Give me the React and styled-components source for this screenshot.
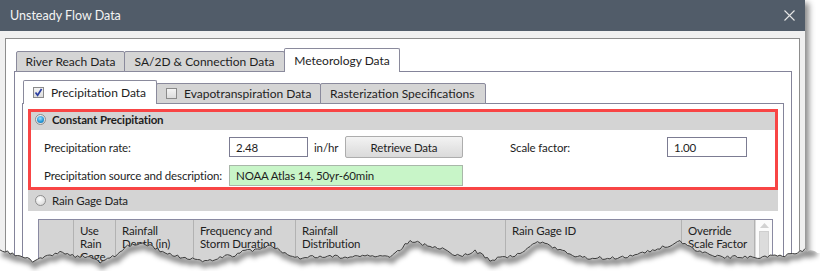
import React from 'react';
import styled, { createGlobalStyle, css } from 'styled-components';

const GlobalStyle = createGlobalStyle`
  html, body {
    margin: 0;
    padding: 0;
    background: #fff;
  }
  body {
    font-family: Lato, "Noto Sans", sans-serif;
    font-size: 11.5px;
    letter-spacing: -0.15px;
    color: #1e1e1e;
  }
`;

const Stage = styled.div`
  position: relative;
  width: 820px;
  height: 271px;
  overflow: hidden;
  background: #fff;
`;

const Window = styled.div`
  width: 805px;
  height: 340px;
  display: flex;
  flex-direction: column;
  background: #f0f0f0;
  box-shadow: 4px 3px 6px rgba(0, 0, 0, 0.45);
`;

const TitleBar = styled.div`
  height: 31px;
  flex: none;
  display: flex;
  align-items: center;
  justify-content: space-between;
  padding: 0 10px 0 10px;
  background: #515c69;
  color: #f4f4f4;
  font-size: 12.5px;
  letter-spacing: 0;
`;

const Client = styled.div`
  flex: 1;
  display: flex;
  padding: 7px 5px 0 5px;
`;

const OuterPanel = styled.div`
  flex: 1;
  display: flex;
  flex-direction: column;
  background: #fff;
  border: 1px solid #8d8d8d;
  border-bottom: none;
  padding: 9px 7px 0 8px;
`;

const TabStrip = styled.div`
  display: flex;
  align-items: flex-end;
  padding-left: ${(p) => p.$indent}px;
  height: ${(p) => p.$height}px;
  margin-bottom: -1px;
  position: relative;
  z-index: 1;
`;

const Tab = styled.div`
  width: ${(p) => p.$width}px;
  box-sizing: border-box;
  display: flex;
  align-items: center;
  justify-content: ${(p) => (p.$start ? 'flex-start' : 'center')};
  gap: 7px;
  padding-left: ${(p) => (p.$start ? 9 : 0)}px;
  border: 1px solid #8a8a9c;
  border-bottom: none;
  border-radius: 2px 2px 0 0;
  font-size: 12px;
  letter-spacing: 0;
  & + & {
    margin-left: -1px;
  }
  ${(p) =>
    p.$active
      ? css`
          height: ${p.$height}px;
          background: #fff;
          position: relative;
          z-index: 2;
        `
      : css`
          height: ${p.$height - 3}px;
          background: #d5d5d5;
          border-bottom: 1px solid #8a8a9c;
        `}
`;

const TabPanel = styled.div`
  flex: 1;
  display: flex;
  flex-direction: column;
  border: 1px solid #84849a;
  border-bottom: none;
  background: #fff;
  padding: ${(p) => p.$pad};
`;

const Section = styled.div`
  position: relative;
  display: flex;
  flex-direction: column;
`;

const SectionHeader = styled.div`
  height: 21px;
  display: flex;
  align-items: center;
  gap: 6px;
  padding-left: 7px;
  background: #d4d4d4;
  font-weight: ${(p) => (p.$bold ? 700 : 400)};
`;

const Radio = styled.span`
  width: 11px;
  height: 11px;
  box-sizing: border-box;
  border-radius: 50%;
  border: 1px solid #8e8e8e;
  background: radial-gradient(circle at 40% 35%, #ffffff 0%, #e6e6e6 55%, #cfcfcf 100%);
  display: inline-flex;
  align-items: center;
  justify-content: center;
  &::after {
    content: '';
    display: ${(p) => (p.$checked ? 'block' : 'none')};
    width: 7px;
    height: 7px;
    border-radius: 50%;
    background: radial-gradient(circle at 45% 35%, #9fe0ff 0%, #2a9ad8 55%, #0e5f9a 100%);
  }
`;

const Check = styled.span`
  width: 11px;
  height: 11px;
  box-sizing: border-box;
  border: 1px solid #8a8a8a;
  background: linear-gradient(#f4f4f4, #dcdcdc);
  display: inline-flex;
  align-items: center;
  justify-content: center;
`;

const Fields = styled.div`
  display: grid;
  grid-template-columns: 185px 79px 37px 118px 47px 157px 80px;
  grid-auto-rows: 22px;
  row-gap: 6px;
  align-items: center;
  padding: 6px 0 4px 16px;
  background: #fff;
`;

const Label = styled.span`
  padding-left: ${(p) => p.$pad || 0}px;
  white-space: nowrap;
`;

const TextBox = styled.div`
  height: ${(p) => (p.$green ? 21 : 20)}px;
  box-sizing: border-box;
  display: flex;
  align-items: center;
  padding-left: 6px;
  border: 1px solid ${(p) => (p.$green ? '#a9b7a9' : '#7c7c92')};
  background: ${(p) => (p.$green ? '#c8f5c8' : '#fff')};
  grid-column: ${(p) => p.$span || 'auto'};
`;

const Button = styled.div`
  height: 22px;
  box-sizing: border-box;
  display: flex;
  align-items: center;
  justify-content: center;
  border: 1px solid #adadad;
  border-radius: 2px;
  background: linear-gradient(#f3f3f3, #e6e6e6 50%, #dadada);
`;

const Annotation = styled.div`
  position: absolute;
  inset: 0;
  border: 3px solid #f84545;
  pointer-events: none;
`;

const TableWrap = styled.div`
  padding: 8px 5px 0 10px;
  background: #fff;
`;

const Table = styled.div`
  display: grid;
  grid-template-columns: 35px 42px 78px 102px 210px 176px 73px 17px;
  border: 1px solid #8a8aa2;
`;

const HeadCell = styled.div`
  height: 60px;
  box-sizing: border-box;
  padding: 4px 6px 0 6px;
  line-height: 13px;
  background: #d4d4d4;
  border-right: 1px solid #b2b2b2;
  white-space: nowrap;
`;

const ScrollBar = styled.div`
  height: 60px;
  background: #fbfbfb;
  border-left: 1px solid #d8d8d8;
  display: flex;
  flex-direction: column;
  align-items: center;
  padding-top: 3px;
  gap: 3px;
`;

const Thumb = styled.div`
  width: 8px;
  flex: 1;
  background: #dcdcdc;
  border: 1px solid #cfcfcf;
`;

const TearLayer = styled.svg`
  position: absolute;
  left: 0;
  top: 0;
  pointer-events: none;
`;

const tearBase = [
  [0, 249], [10, 253], [25, 258], [33, 261], [45, 257], [60, 252], [75, 256], [90, 258],
  [100, 262], [115, 256], [125, 247], [140, 243], [150, 245], [160, 251], [175, 256],
  [195, 259], [205, 262], [220, 257], [235, 255], [245, 251], [260, 250], [270, 245],
  [280, 251], [300, 258], [320, 256], [345, 257], [370, 255], [390, 258], [400, 250],
  [410, 240], [425, 245], [440, 248], [460, 257], [475, 251], [490, 260], [505, 257],
  [520, 254], [530, 246], [540, 242], [555, 248], [575, 256], [590, 258], [620, 258],
  [640, 253], [660, 248], [680, 242], [695, 250], [720, 257], [760, 257], [790, 255],
  [805, 250], [820, 252],
];

const tearY = (x) => {
  for (let i = 1; i < tearBase.length; i++) {
    const [x1, y1] = tearBase[i];
    const [x0, y0] = tearBase[i - 1];
    if (x <= x1) return y0 + ((y1 - y0) * (x - x0)) / (x1 - x0);
  }
  return 252;
};

const noise = (x) => {
  const h = Math.sin(x * 91.7 + 3.1) * 10000;
  return h - Math.floor(h) - 0.5;
};

const tearPts = [];
for (let x = 0; x <= 820; x += 2.5) {
  tearPts.push([x, +(tearY(x) + noise(x) * 3).toFixed(1)]);
}
const tearLine = (limit) =>
  tearPts
    .filter(([x]) => x <= limit)
    .map(([x, y], i) => `${i ? 'L' : 'M'}${x},${y}`)
    .join(' ');
const tearArea = `${tearLine(820)} L820,271 L0,271 Z`;

const TornEdge = () => (
  <TearLayer width="820" height="271" viewBox="0 0 820 271">
    <defs>
      <clipPath id="below">
        <path d={tearArea} />
      </clipPath>
      <filter id="soft" x="-5%" y="-50%" width="110%" height="200%">
        <feGaussianBlur stdDeviation="2.5" />
      </filter>
    </defs>
    <path d={tearArea} fill="#fff" />
    <g clipPath="url(#below)">
      <path
        d={tearLine(815)}
        transform="translate(2,3)"
        fill="none"
        stroke="rgba(0,0,0,0.45)"
        strokeWidth="6"
        filter="url(#soft)"
      />
    </g>
    <path d={tearLine(806)} fill="none" stroke="#3c3c3c" strokeWidth="1" />
  </TearLayer>
);

const CloseIcon = () => (
  <svg width="11" height="11" viewBox="0 0 11 11">
    <path d="M0.5 0.5 L10.5 10.5 M10.5 0.5 L0.5 10.5" stroke="#e6e6e6" strokeWidth="1.1" />
  </svg>
);

const CheckMark = () => (
  <svg width="9" height="9" viewBox="0 0 9 9">
    <path d="M1.5 4.5 L3.6 7.2 L7.6 1" fill="none" stroke="#2b3ea0" strokeWidth="1.7" />
  </svg>
);

const headers = [
  [],
  ['Use', 'Rain', 'Gage'],
  ['Rainfall', 'Depth (in)'],
  ['Frequency and', 'Storm Duration'],
  ['Rainfall', 'Distribution'],
  ['Rain Gage ID'],
  ['Override', 'Scale Factor'],
];

const App = () => (
  <Stage>
    <GlobalStyle />
    <Window>
      <TitleBar>
        <span>Unsteady Flow Data</span>
        <CloseIcon />
      </TitleBar>
      <Client>
        <OuterPanel>
          <TabStrip $indent={2} $height={24}>
            <Tab $width={109} $height={24}>River Reach Data</Tab>
            <Tab $width={161} $height={24}>SA/2D &amp; Connection Data</Tab>
            <Tab $width={116} $height={24} $active>Meteorology Data</Tab>
          </TabStrip>
          <TabPanel $pad="8px 7px 0 7px">
            <TabStrip $indent={1} $height={24}>
              <Tab $width={134} $height={24} $active $start>
                <Check><CheckMark /></Check>
                Precipitation Data
              </Tab>
              <Tab $width={165} $height={24} $start>
                <Check />
                Evapotranspiration Data
              </Tab>
              <Tab $width={166} $height={24} $start>
                Rasterization Specifications
              </Tab>
            </TabStrip>
            <TabPanel $pad="5px 5px 0 5px">
              <Section>
                <SectionHeader $bold>
                  <Radio $checked />
                  Constant Precipitation
                </SectionHeader>
                <Fields>
                  <Label>Precipitation rate:</Label>
                  <TextBox>2.48</TextBox>
                  <Label $pad={6}>in/hr</Label>
                  <Button>Retrieve Data</Button>
                  <span />
                  <Label>Scale factor:</Label>
                  <TextBox>1.00</TextBox>
                  <Label>Precipitation source and description:</Label>
                  <TextBox $green $span="2 / span 3">NOAA Atlas 14, 50yr-60min</TextBox>
                </Fields>
                <Annotation />
              </Section>
              <Section>
                <SectionHeader>
                  <Radio />
                  Rain Gage Data
                </SectionHeader>
                <TableWrap>
                  <Table>
                    {headers.map((lines, i) => (
                      <HeadCell key={i}>
                        {lines.map((l) => (
                          <div key={l}>{l}</div>
                        ))}
                      </HeadCell>
                    ))}
                    <ScrollBar>
                      <svg width="9" height="5" viewBox="0 0 9 5">
                        <path d="M0 5 L4.5 0 L9 5 Z" fill="#d2d2d2" />
                      </svg>
                      <Thumb />
                    </ScrollBar>
                  </Table>
                </TableWrap>
              </Section>
            </TabPanel>
          </TabPanel>
        </OuterPanel>
      </Client>
    </Window>
    <TornEdge />
  </Stage>
);

export default App;
